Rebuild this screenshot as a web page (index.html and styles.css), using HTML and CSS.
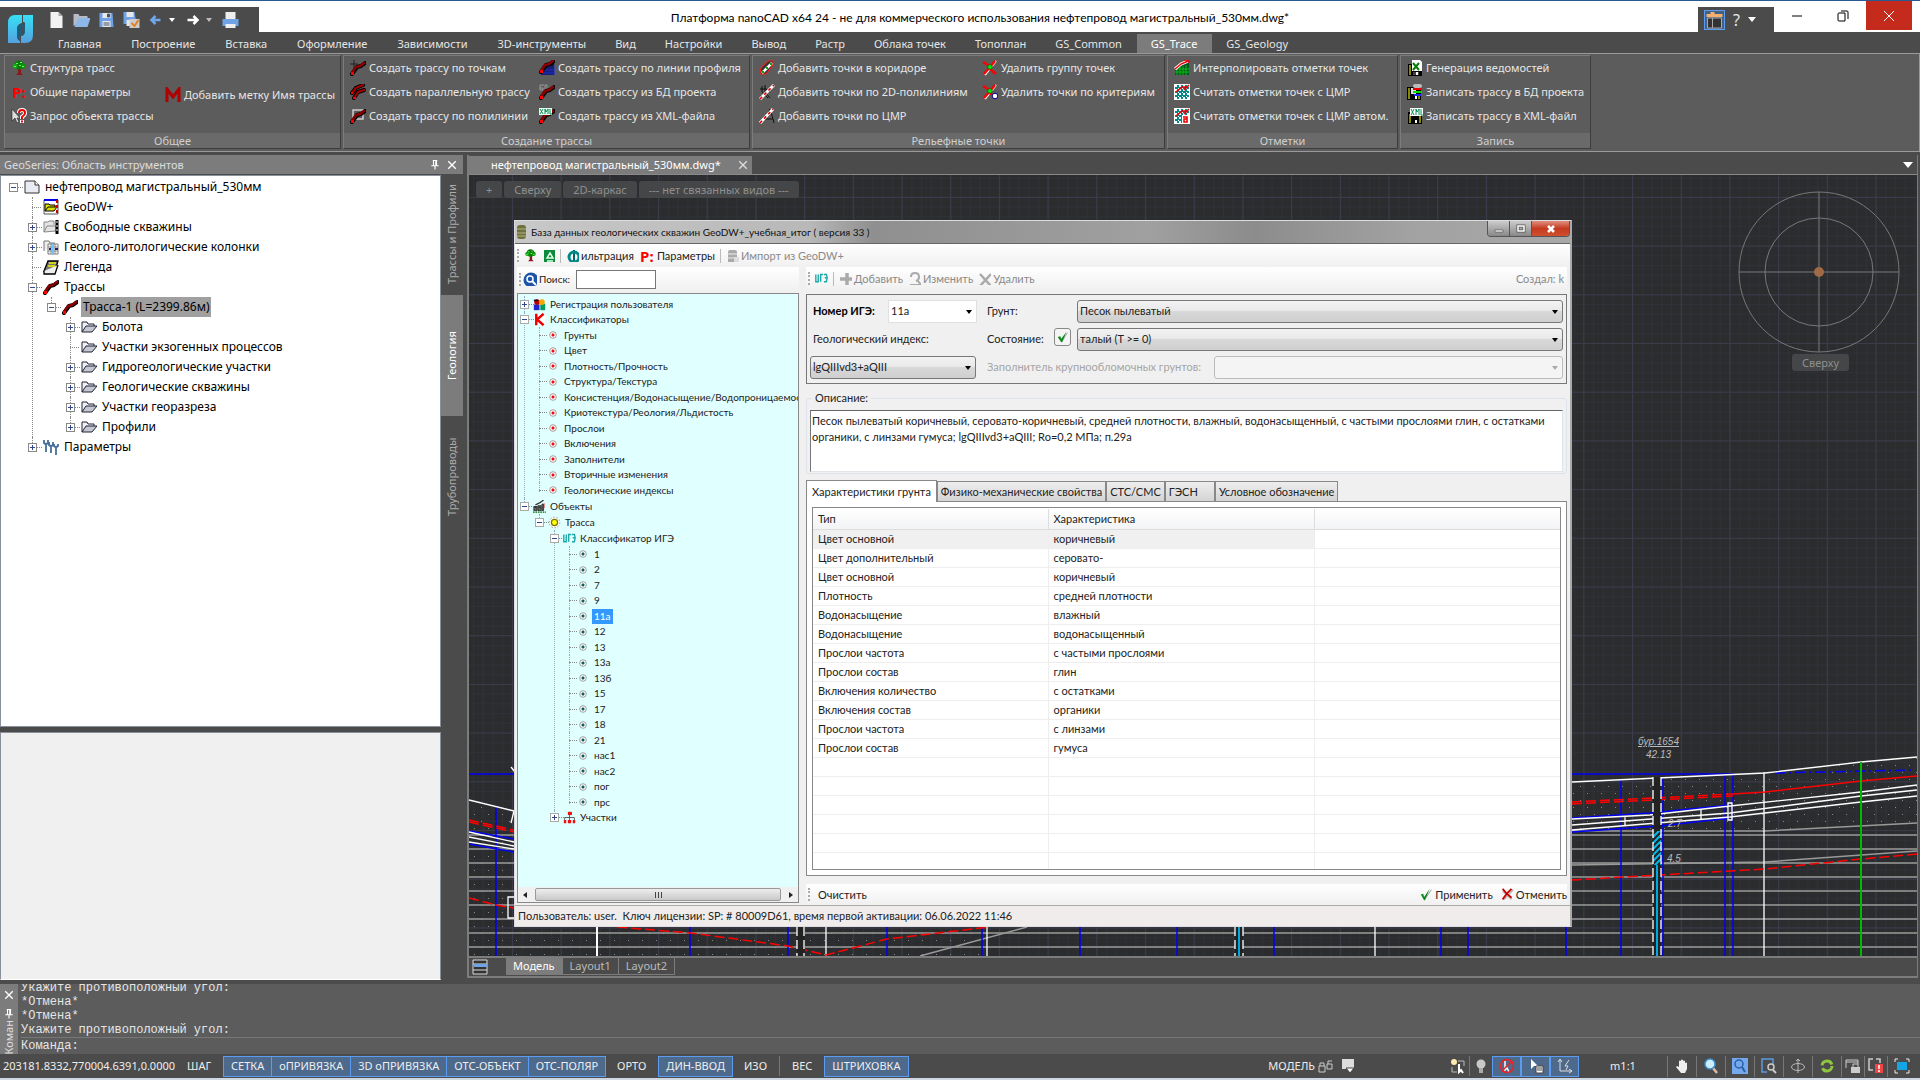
FILE: index.html
```html
<!DOCTYPE html>
<html lang="ru">
<head>
<meta charset="utf-8">
<title>Платформа nanoCAD x64 24</title>
<link rel="stylesheet" href="styles.css">
</head>
<body>
<svg class="sprite" aria-hidden="true">
  <symbol id="route" viewBox="0 0 16 16"><path d="M2 14l5-7 4-1 4-3" fill="none" stroke="#000" stroke-width="4" stroke-linecap="round" stroke-linejoin="round"/><path d="M2 13l4-6 4-1 4-3" fill="none" stroke="#8b0000" stroke-width="2.600" stroke-linecap="round" stroke-linejoin="round"/><path d="M1 12h3v3H1z" fill="#f00"/></symbol>
  <symbol id="tree" viewBox="0 0 16 16"><path d="M7 8h3v5l2 2H5l2-2z" fill="#8b1a1a"/><circle cx="8" cy="5" r="4.600" fill="#0b7a0b"/><circle cx="4" cy="6" r="2.500" fill="#19a519"/><circle cx="12" cy="6" r="2.500" fill="#0f930f"/><path d="M5 3h2v1H5zM9 2h2v1H9zM8 5h2v1H8zM3 6h2v1H3zM11 6h2v1h-2z" fill="#5f5"/></symbol>
  <symbol id="query" viewBox="0 0 16 16"><path d="M1 1v12l3-3 2 5 2-1-2-4h3z" fill="#ddd" stroke="#222" stroke-width=".6"/><path d="M8 5q0-3 3-3t3 3q0 2-3 4v2m0 1v3" fill="none" stroke="#fff" stroke-width="4"/><path d="M8 5q0-3 3-3t3 3q0 2-3 4v2m0 1.500v2" fill="none" stroke="#e00" stroke-width="2"/></symbol>
  <symbol id="route-pts" viewBox="0 0 16 16"><path d="M4 0v8M0 4h8" stroke="#222"/><use href="#route"/></symbol>
  <symbol id="route-par" viewBox="0 0 16 16"><path d="M2 9l4-5 7-3M4 14l4-6 6-2" fill="none" stroke="#000" stroke-width="4" stroke-linecap="round"/><path d="M2 9l4-5 7-3M4 14l4-6 6-2" fill="none" stroke="#a00000" stroke-width="2.200" stroke-linecap="round"/><path d="M3 13h3v2H3zM1 8h2v2H1z" fill="#f00"/></symbol>
  <symbol id="route-poly" viewBox="0 0 16 16"><path d="M3 2h10v9H3z" fill="none" stroke="#ccc" stroke-width="1.500"/><use href="#route"/></symbol>
  <symbol id="route-prof" viewBox="0 0 16 16"><path d="M2 15V9l5-4 8-2v12z" fill="#113"/><path d="M3 15v-3m2 3V9m2 6V8m2 7V7m2 8V6m2 9V6m2 9V5M2 13h14M5 10h11" stroke="#2233dd" stroke-width=".8"/><use href="#route" y="-2"/></symbol>
  <symbol id="route-db" viewBox="0 0 16 16"><path d="M1 1h4M1 1v5h3V4H1M6 6V1h2v5M5 6h4" stroke="#999" fill="none"/><use href="#route"/></symbol>
  <symbol id="route-xml" viewBox="0 0 16 16"><use href="#route"/><path d="M0 0h13v7H0z" fill="#e8fff4"/><path d="M1 1l3 5M4 1L1 6M6 6V1l1 3 2-3v5M11 1v5h2" fill="none" stroke="#0a8a50"/></symbol>
  <symbol id="corridor" viewBox="0 0 16 16"><path d="M1 13l1-5 7-7h5v4l-7 9H2z" fill="#333" stroke="#f02020" stroke-width="1.200"/><path d="M3 13L13 3" stroke="#fff" stroke-width="2.500"/><path d="M3 11h2v2H3zM7 7h2v2H7zM11 3h2v2h-2z" fill="#0a0"/></symbol>
  <symbol id="relief" viewBox="0 0 16 16"><path d="M3 2v6l6 6M6 1v7l5 6M1 5h6l4 3" fill="none" stroke="#111"/><path d="M1 15L15 1" stroke="#fff" stroke-width="3"/><path d="M1 15L15 1" stroke="#d00" stroke-width="1.600" stroke-dasharray="3 3"/></symbol>
  <symbol id="relief2" viewBox="0 0 16 16"><path d="M11 1L6 11h8zM14 11l1 4M6 11l-5 4" fill="none" stroke="#111"/><path d="M1 15L14 1" stroke="#fff" stroke-width="3"/><path d="M1 15L14 1" stroke="#d00" stroke-width="1.600" stroke-dasharray="3 3"/></symbol>
  <symbol id="del" viewBox="0 0 16 16"><path d="M3 15L14 1" stroke="#fff" stroke-width="2"/><path d="M1 2l5 3 3 5 5 4M13 1L8 7l-6 7" fill="none" stroke="#f00" stroke-width="2.500"/><circle cx="8" cy="7" r="2.300" fill="#0e0" stroke="#050" stroke-width=".6"/></symbol>
  <symbol id="del2" viewBox="0 0 16 16"><use href="#del"/><circle cx="13" cy="12" r="2.800" fill="#fff" stroke="#009"/></symbol>
  <symbol id="interp" viewBox="0 0 16 16"><path d="M1 15V9l7-4 7-2v12z" fill="#052"/><path d="M3 15V9m3 6V7m3 8V6m3 9V5M1 12h14M2 9h13" stroke="#1b1" /><path d="M1 9l6-5 7-3" stroke="#fff" stroke-width="3" fill="none"/><path d="M1 9l6-5 7-3m-4-1h5v3" stroke="#e00" stroke-width="1.400" fill="none"/></symbol>
  <symbol id="grid" viewBox="0 0 16 16"><path d="M0 0h16v16H0z" fill="#fff"/><path d="M1 4h14M1 8h14M1 12h14M4 1v14M8 1v14M12 1v14" stroke="#088" stroke-width="2" stroke-dasharray="3 1"/><path d="M2 8l6-5h6m-4 3l5-5" stroke="#e00" stroke-width="1.600" fill="none"/></symbol>
  <symbol id="grida" viewBox="0 0 16 16"><use href="#grid"/><path d="M8 7h7v8H8z" fill="#fff"/><path d="M9 9h4v5h-3v-3h3" stroke="#e00" stroke-width="1.600" fill="none"/></symbol>
  <symbol id="flop-x" viewBox="0 0 16 16"><path d="M1 4h14v12H1z" fill="#000"/><path d="M2 5h2v10H2z" fill="#880"/><path d="M5 0h8l2 2v9H5z" fill="#fff"/><path d="M6 3l6 7M12 3L6 10" stroke="#0a7a0a" stroke-width="2"/><path d="M6 12h6v3H6z" fill="#444"/><path d="M9 12h2v3H9z" fill="#fff"/></symbol>
  <symbol id="flop-db" viewBox="0 0 16 16"><path d="M0 3h14v13H0z" fill="#000"/><path d="M1 4h2v11H1zM11 12h2v3h-2z" fill="#880"/><path d="M4 4h5v6H4z" fill="#ddd"/><rect x="6" y="0" width="9" height="4" rx="2" fill="#bbb"/><path d="M6 5h9" stroke="#e00" stroke-width="2"/><path d="M6 8h9" stroke="#0d0" stroke-width="2"/><path d="M7 11h7" stroke="#22e" stroke-width="2"/><path d="M8 12h2v3H8z" fill="#fff"/></symbol>
  <symbol id="flop-xml" viewBox="0 0 16 16"><path d="M1 4h14v12H1z" fill="#000"/><path d="M2 6h2v9H2zM12 8h2v7h-2z" fill="#880"/><path d="M3 0h13v8H3z" fill="#fff"/><path d="M4 1l3 6M7 1L4 7M9 7V1l1 3 2-3v6M14 1v6h2" fill="none" stroke="#0a8a50"/><path d="M8 12h2v3H8z" fill="#fff"/></symbol>
  <symbol id="folder" viewBox="0 0 16 16"><path d="M1 13V3h5l1 2h6v3" fill="#eef0f5" stroke="#223"/><path d="M1 13l4-6h11l-5 6z" fill="#c4c8d2" stroke="#223"/></symbol>
  <symbol id="page" viewBox="0 0 16 16"><path d="M1 2h10l4 4v8H1z" fill="#e8ebf2" stroke="#333"/><path d="M11 2v4h4" fill="#fff" stroke="#333"/></symbol>
  <symbol id="geodw" viewBox="0 0 16 16"><path d="M1 1h14v14H1z" fill="#fff" stroke="#555"/><path d="M1 0h14v2H1z" fill="#00e"/><path d="M2 12V5h4l1 1h5v2M2 12l3-4h9l-3 4z" fill="#dd0" stroke="#000"/><path d="M14 1v13" stroke="#c00" stroke-width="2" stroke-dasharray="3 2"/></symbol>
  <symbol id="wells" viewBox="0 0 16 16"><path d="M1 13V3h4l1-1h5v4M1 13l3-6h9v5z" fill="#e4e4e4" stroke="#888"/><path d="M14 1v14" stroke="#000" stroke-width="3"/><path d="M14 2v12" stroke="#fff" stroke-dasharray="2 2"/></symbol>
  <symbol id="cols" viewBox="0 0 16 16"><path d="M1 12V2h5l1 2h5" fill="#eee" stroke="#777"/><path d="M5 5h10v10H5z" fill="#fff" stroke="#777"/><path d="M8 5v10M12 5v10M5 8h10M5 12h10" stroke="#888"/><path d="M9 5h2v10H9z" fill="#6ac5ff"/><path d="M6 9h2v2H6zM12 9h3v2h-3z" fill="#226"/></symbol>
  <symbol id="book" viewBox="0 0 16 16"><path d="M1 12L5 2h10l-3 10z" fill="#777" stroke="#000" stroke-width="1.300"/><path d="M1 12v3h11l3-9" fill="#eee" stroke="#000" stroke-width="1.300"/><path d="M6 4h7M5 7h7" stroke="#ee0" stroke-width="1.500"/></symbol>
  <symbol id="tools" viewBox="0 0 16 16"><path d="M1 1v3q2 2 4 0V1M3 5v8M6 3v3q2 2 4 0V3M8 7v7M11 5v2q2 2 4 0V5M13 8v8" fill="none" stroke="#456f9a" stroke-width="1.800"/></symbol>
  <symbol id="users" viewBox="0 0 16 16"><path d="M1 8h7v7H1z" fill="#22c"/><path d="M9 7h6v8H9z" fill="#0a9a60"/><circle cx="5" cy="5" r="3.500" fill="#b00"/><circle cx="11" cy="5" r="3.500" fill="#f5a800"/><path d="M1 2h5v2H1z" fill="#111"/></symbol>
  <symbol id="objs" viewBox="0 0 16 16"><path d="M1 8h4v5H1zM6 7h4v6H6zM11 5h2v8h-2z" fill="#666" stroke="#222"/><path d="M3 6l6-3 4-3M2 9h2M7 9h2" stroke="#333" stroke-width="1.500"/><path d="M0 15h16" stroke="#060" stroke-dasharray="2 1" stroke-width="1.500"/><path d="M14 4v6" stroke="#e66"/></symbol>
  <symbol id="sun" viewBox="0 0 16 16"><circle cx="8" cy="8" r="6.500" fill="#fff" stroke="#888" stroke-dasharray="2 2"/><circle cx="8" cy="8" r="3.800" fill="#ff0" stroke="#770" stroke-width="1.500"/></symbol>
  <symbol id="ige" viewBox="0 0 16 16"><path d="M1 3v9h3V3v9M7 12V3h3M11 3h3l1 4-1 5h-3M12 7h3" fill="none" stroke="#19a9a9" stroke-width="1.700"/></symbol>
  <symbol id="org" viewBox="0 0 16 16"><path d="M6 1h5v4H6z" fill="#e11"/><path d="M8 5v3M2 11V8h12v3M8 8v3" stroke="#444" fill="none"/><path d="M1 11h3v4H1zM6 11h4v4H6zM12 11h3v4h-3z" fill="#e11"/></symbol>
  <symbol id="bullet-r" viewBox="0 0 8 8"><circle cx="4" cy="4" r="3.300" fill="#fff" stroke="#a08080" stroke-width=".8"/><path d="M4 2.500v3M2.500 4h3" stroke="#e00" stroke-width="1.600"/></symbol>
  <symbol id="bullet-g" viewBox="0 0 8 8"><circle cx="4" cy="4" r="3.300" fill="#fff" stroke="#888" stroke-width=".8"/><path d="M4 2.500v3M2.500 4h3" stroke="#055" stroke-width="1.600"/></symbol>
  <symbol id="check" viewBox="0 0 16 16"><path d="M6 14l8-12" stroke="#999" stroke-width="1.200"/><path d="M1 8l3-1 1 4 7-10-6 14H5z" fill="#0a8a1a"/></symbol>
  <symbol id="cross" viewBox="0 0 16 16"><path d="M4 14L15 2M2 4l11 10" stroke="#bbb" stroke-width="2"/><path d="M2 1l5 6 6-6M7 7l-5 7M7 7l6 5" stroke="#c00" stroke-width="2.200" fill="none"/></symbol>
  <symbol id="lens" viewBox="0 0 16 16"><path d="M10 10l4 5" stroke="#dba" stroke-width="2.500"/><circle cx="7" cy="6" r="5" fill="#cdeeff" stroke="#3d8fd0" stroke-width="1.500"/></symbol>
  <symbol id="bulb" viewBox="0 0 16 16"><circle cx="8" cy="6" r="4.500" fill="currentColor"/><path d="M6 10h4v5H6z" fill="#aaa"/></symbol>
  <symbol id="pin" viewBox="0 0 16 16"><path d="M5 2h6M6 2v7M10 2v7M9 2v7M3 9h10M8 9v5" stroke="#fff" stroke-width="1.500"/></symbol>
  <symbol id="x" viewBox="0 0 16 16"><path d="M3 3l10 10M13 3L3 13" stroke="currentColor" stroke-width="1.800"/></symbol>
</svg>

<header class="titlebar">
  <div class="quick">
    <svg class="logo" viewBox="0 0 26 30"><defs><linearGradient id="lg" x2="0" y2="1"><stop stop-color="#35e1f5"/><stop offset="1" stop-color="#55a0e0"/></linearGradient></defs><path d="M7 0h7v8q-5 1-5 6v7q0 4 3 5v2H0V8q0-8 7-8zM15 0h10v20q0 8-8 8h-4v-7q4 0 4-5V8q0-1-2-1z" fill="url(#lg)"/><path d="M14 9q-5 1-5 5v7q0 3 3 4v-5h2q3-1 3-5v-3q0-3-3-3z" fill="#1d5e7c"/><path d="M13 12h3v6h-3z" fill="#4b4b4b"/></svg>
    <button aria-label="Создать"><svg viewBox="0 0 16 18"><path d="M2 1h8l4 4v12H2z" fill="#f2f2f2"/><path d="M10 1v4h4z" fill="#aaa"/></svg></button>
    <button aria-label="Открыть"><svg viewBox="0 0 16 18"><path d="M0 15V3h5l1 2h8v3" fill="#b7bcc4"/><path d="M1 16l4-9h12l-3 9z" fill="#8fb8ea"/></svg></button>
    <button aria-label="Сохранить"><svg viewBox="0 0 16 18"><path d="M1 2h13l1 14H1z" fill="#6fa3e6"/><path d="M4 2h8v5H4zM4 10h8v6H4z" fill="#e8e8e8"/><path d="M9 3h2v3H9zM5 12h6M5 14h6" fill="#456" stroke="#456"/></svg></button>
    <button aria-label="Сохранить как"><svg viewBox="0 0 16 18"><path d="M0 1h11l2 12H0z" fill="#6fa3e6"/><path d="M3 1h7v5H3zM3 9h7v6H3z" fill="#e8e8e8"/><path d="M6 8h10v9H6z" fill="#ccc"/><path d="M8 12l3 3 4-6" stroke="#e08020" stroke-width="2" fill="none"/></svg></button>
    <button aria-label="Отменить"><svg viewBox="0 0 16 18"><path d="M12 9H3m4-4L3 9l4 4" stroke="#6fa8ea" stroke-width="2.500" fill="none"/></svg></button>
    <i class="down"></i>
    <button aria-label="Повторить"><svg viewBox="0 0 16 18"><path d="M2 9h10M8 5l4 4-4 4" stroke="#fff" stroke-width="2.500" fill="none"/></svg></button>
    <i class="down dim"></i>
    <button aria-label="Печать"><svg viewBox="0 0 16 18"><path d="M3 1h10v8H3z" fill="#eee"/><path d="M0 8h16v7H0z" fill="#6fa3e6"/><path d="M3 13h10v4H3z" fill="#eee"/></svg></button>
    <i class="down more"></i>
  </div>
  <h1>Платформа nanoCAD x64 24 - не для коммерческого использования нефтепровод магистральный_530мм.dwg*</h1>
  <div class="helpbox">
    <button class="face" aria-label="Интерфейс"><svg viewBox="0 0 18 18"><path d="M1 3h4V1h4v2h8v3H1z" fill="#f5b070"/><path d="M2 7h14v10H2zM7 7v10" fill="#333" stroke="#aaa"/></svg></button>
    <button class="q">?</button><i class="down"></i>
  </div>
  <div class="winbtns">
    <button aria-label="Свернуть"><svg viewBox="0 0 12 12"><path d="M1 6h10" stroke="#000"/></svg></button>
    <button aria-label="Развернуть"><svg viewBox="0 0 12 12"><path d="M1 4q0-1 1-1h6v8H2q-1 0-1-1zM4 1h6q1 0 1 1v7" fill="none" stroke="#000"/></svg></button>
    <button class="close" aria-label="Закрыть"><svg viewBox="0 0 12 12"><path d="M1 1l10 10M11 1L1 11" stroke="#fff"/></svg></button>
  </div>
</header>

<nav class="menu">
  <a href="#">Главная</a><a href="#">Построение</a><a href="#">Вставка</a><a href="#">Оформление</a><a href="#">Зависимости</a><a href="#">3D-инструменты</a><a href="#">Вид</a><a href="#">Настройки</a><a href="#">Вывод</a><a href="#">Растр</a><a href="#">Облака точек</a><a href="#">Топоплан</a><a href="#">GS_Common</a><a href="#" class="on">GS_Trace</a><a href="#">GS_Geology</a>
</nav>

<section class="ribbon">
  <div class="group g1">
    <div class="cols">
      <div class="col"><button><svg><use href="#tree"/></svg>Структура трасс</button><button><b class="pp">P:</b>Общие параметры</button><button><svg><use href="#query"/></svg>Запрос объекта трассы</button></div>
      <div class="col mid"><button><svg viewBox="0 0 16 16"><path d="M2 15V2l6 8 6-8v13" fill="none" stroke="#b00000" stroke-width="3"/></svg>Добавить метку Имя трассы</button></div>
    </div>
    <h2>Общее</h2>
  </div>
  <div class="group g2">
    <div class="cols">
      <div class="col"><button><svg><use href="#route-pts"/></svg>Создать трассу по точкам</button><button><svg><use href="#route-par"/></svg>Создать параллельную трассу</button><button><svg><use href="#route-poly"/></svg>Создать трассу по полилинии</button></div>
      <div class="col"><button><svg><use href="#route-prof"/></svg>Создать трассу по линии профиля</button><button><svg><use href="#route-db"/></svg>Создать трассу из БД проекта</button><button><svg><use href="#route-xml"/></svg>Создать трассу из XML-файла</button></div>
    </div>
    <h2>Создание трассы</h2>
  </div>
  <div class="group g3">
    <div class="cols">
      <div class="col"><button><svg><use href="#corridor"/></svg>Добавить точки в коридоре</button><button><svg><use href="#relief"/></svg>Добавить точки по 2D-полилиниям</button><button><svg><use href="#relief2"/></svg>Добавить точки по ЦМР</button></div>
      <div class="col"><button><svg><use href="#del"/></svg>Удалить группу точек</button><button><svg><use href="#del2"/></svg>Удалить точки по критериям</button></div>
    </div>
    <h2>Рельефные точки</h2>
  </div>
  <div class="group g4">
    <div class="cols">
      <div class="col"><button><svg><use href="#interp"/></svg>Интерполировать отметки точек</button><button><svg><use href="#grid"/></svg>Считать отметки точек с ЦМР</button><button><svg><use href="#grida"/></svg>Считать отметки точек с ЦМР автом.</button></div>
    </div>
    <h2>Отметки</h2>
  </div>
  <div class="group g5">
    <div class="cols">
      <div class="col"><button><svg><use href="#flop-x"/></svg>Генерация ведомостей</button><button><svg><use href="#flop-db"/></svg>Записать трассу в БД проекта</button><button><svg><use href="#flop-xml"/></svg>Записать трассу в XML-файл</button></div>
    </div>
    <h2>Запись</h2>
  </div>
</section>

<main class="work">
  <aside class="dock">
    <div class="dockhead"><span>GeoSeries: Область инструментов</span><svg><use href="#pin"/></svg><svg><use href="#x"/></svg></div>
    <div class="dockbody">
      <div class="panes">
        <div class="pane treepane">
          <ul class="tree big root">
            <li><div class="row"><i class="box minus"></i><svg><use href="#page"/></svg><span>нефтепровод магистральный_530мм</span></div>
              <ul>
                <li><div class="row"><i class="stub"></i><svg><use href="#geodw"/></svg><span>GeoDW+</span></div></li>
                <li><div class="row"><i class="box plus"></i><svg><use href="#wells"/></svg><span>Свободные скважины</span></div></li>
                <li><div class="row"><i class="box plus"></i><svg><use href="#cols"/></svg><span>Геолого-литологические колонки</span></div></li>
                <li><div class="row"><i class="stub"></i><svg><use href="#book"/></svg><span>Легенда</span></div></li>
                <li><div class="row"><i class="box minus"></i><svg><use href="#route"/></svg><span>Трассы</span></div>
                  <ul>
                    <li><div class="row"><i class="box minus"></i><svg><use href="#route"/></svg><span class="sel">Трасса-1 (L=2399.86м)</span></div>
                      <ul>
                        <li><div class="row"><i class="box plus"></i><svg><use href="#folder"/></svg><span>Болота</span></div></li>
                        <li><div class="row"><i class="stub"></i><svg><use href="#folder"/></svg><span>Участки экзогенных процессов</span></div></li>
                        <li><div class="row"><i class="box plus"></i><svg><use href="#folder"/></svg><span>Гидрогеологические участки</span></div></li>
                        <li><div class="row"><i class="box plus"></i><svg><use href="#folder"/></svg><span>Геологические скважины</span></div></li>
                        <li><div class="row"><i class="box plus"></i><svg><use href="#folder"/></svg><span>Участки георазреза</span></div></li>
                        <li><div class="row"><i class="box plus"></i><svg><use href="#folder"/></svg><span>Профили</span></div></li>
                      </ul>
                    </li>
                  </ul>
                </li>
                <li><div class="row"><i class="box plus"></i><svg><use href="#tools"/></svg><span>Параметры</span></div></li>
              </ul>
            </li>
          </ul>
        </div>
        <div class="pane props"></div>
      </div>
      <div class="vtabs"><button>Трассы и Профили</button><button class="on">Геология</button><button>Трубопроводы</button></div>
    </div>
  </aside>

  <section class="docs">
    <div class="doctabs"><button class="doctab">нефтепровод магистральный_530мм.dwg*<svg><use href="#x"/></svg></button><i class="down"></i></div>
    <div class="canvas">
      <svg class="drawing" viewBox="469 175 1448 781" preserveAspectRatio="xMaxYMax slice">
        <defs>
          <pattern id="minor" x="1583.300" y="294.300" width="9.740" height="9.740" patternUnits="userSpaceOnUse"><path d="M0 .5h9.740M.5 0v9.740" stroke="#303138"/></pattern>
          <pattern id="major" x="1583.300" y="294.300" width="48.700" height="48.700" patternUnits="userSpaceOnUse"><path d="M0 .5h48.700M.5 0v48.700" stroke="#3b3b4c"/></pattern>
          <pattern id="dots" x="473" y="940" width="14" height="14" patternUnits="userSpaceOnUse"><path d="M1 0h1v1H1zM8 7h1v1H8z" fill="#888"/></pattern>
          <pattern id="hatch" width="6" height="6" patternUnits="userSpaceOnUse"><path d="M-1 7L7-1M-1 1l2-2M5 7l2-2" stroke="#00b8f0" stroke-width="2"/></pattern>
        </defs>
        <rect x="469" y="175" width="1448" height="781" fill="#2b2c2e"/>
        <rect x="469" y="175" width="1448" height="781" fill="url(#minor)"/>
        <rect x="469" y="175" width="1448" height="781" fill="url(#major)"/>
        <g fill="none" stroke="#77787a"><circle cx="1819" cy="272" r="80"/><circle cx="1819" cy="272" r="54"/><path d="M1739 272h160M1819 192v160"/></g>
        <circle cx="1819" cy="272" r="5" fill="#a06a45"/>
        <path d="M469 800l45 11v35l-45-12zM1572 783l193-10 152-16v66l-152 7h-193zM469 850h45v106h-45zM514 927h475v29H514z" fill="url(#dots)"/>
        <g stroke="#9a9a9a" stroke-width="1.500" fill="none">
          <path d="M469 835h45M469 849h45M469 863h45M469 877h45M469 891h45M469 905h45M469 919h45M1572 835h345M1572 849h345M1572 863h345M1572 877h345M1572 891h345M1572 905h345M1572 919h345M469 933h1448M469 947h1448"/>
          <path d="M1572 831h193l152-8M1572 865l193-3 152-11M920 956l107-29"/>
        </g>
        <path d="M496 807v149M690 927v29M788 927v29M887 927v29M982 927v29M1080 927v29M1177 927v29M1274 927v29M1441 927v29M1468 927v29M1566 927v29M1621 779v177M1663 778v178M1725 775v181M1733 775v181M469 774h45M1572 774h161M469 831l45 8M469 844l45 8M1572 818l78-5 80-8M1572 832l88-6 70-8" stroke="#0000f5" stroke-width="1.500" fill="none"/>
        <path d="M1775 773l138-3" stroke="#00f" stroke-width="1.500" stroke-dasharray="10 4 2 4"/>
        <path d="M597 927v29" stroke="#fff" stroke-width="2"/>
        <g stroke="#fff" stroke-width="1.300" fill="none">
          <path d="M826 927v29M987 927v29M1375 927v29M1764 772v184M514 897h-6v21h6M469 800l45 11M469 832l45 10M469 837l45 9M469 842l45 7M511 823l3-12M511 767l4 5"/>
          <path d="M1572 782l193-9 96-11 56-5M1572 819l78-4 80-9 131-14 56-7M1572 825l158-12 131-17 56-6M1572 830l158-13 131-15 56-6M1625 816v10M1701 809v10M1728 803h4v17h-4z"/>
        </g>
        <g stroke="#f00" stroke-width="1.500" fill="none">
          <path d="M1733 794l32-2 96-11 56-5"/>
          <path d="M1572 802l161-8M1572 804l161-8M469 820l45 10M469 822l45 10M469 898l27 7 18 3M617 927l74 6 97 13 38 9 61-16 103-12M1572 880l88-5 105-6 96-10 56-5" stroke-dasharray="10 4"/>
        </g>
        <path d="M1861 762v194" stroke="#0b0" stroke-width="2"/>
        <path d="M1653 777h8v179h-8zM797 927h8v29h-8zM1235 927h8v29h-8z" fill="#222"/>
        <path d="M1653 831h8v34h-8z" fill="url(#hatch)"/>
        <path d="M1657 865v91M1239 927v29" stroke="#00a8e0" stroke-width="2"/>
        <path d="M1653 777v179M1661 777v179M797 927v29M804 927v29M1235 927v29M1243 927v29" stroke="#fff" stroke-width="1.300" stroke-dasharray="9 4"/>
        <g class="cadtext"><text x="1638" y="745" text-decoration="underline">бур.1654</text><text x="1646" y="758">42.13</text><text x="1668" y="827">2.7</text><text x="1667" y="862">4.5</text></g>
      </svg>
      <div class="viewbtns"><button>+</button><button>Сверху</button><button>2D-каркас</button><button>--- нет связанных видов ---</button></div>
      <button class="cube">Сверху</button>
    </div>
    <div class="layouts"><svg class="sheet" viewBox="0 0 16 16"><path d="M1 1h14v14H1zM1 5h14M1 11h14" fill="#333" stroke="#ddd"/><path d="M2 5h13v3H2z" fill="#6fa3e6"/></svg><button class="on">Модель</button><button>Layout1</button><button>Layout2</button></div>
  </section>
</main>

<section class="console">
  <div class="conside"><svg><use href="#x"/></svg><svg><use href="#pin"/></svg><span>Коман</span></div>
  <div class="conmain">
    <div class="log"><p>Укажите противоположный угол:</p><p>*Отмена*</p><p>*Отмена*</p><p>Укажите противоположный угол:</p></div>
    <label class="cmd">Команда:<input type="text" aria-label="Команда"></label>
  </div>
</section>

<footer class="status">
  <span class="coords">203181.8332,770004.6391,0.0000</span>
  <button>ШАГ</button><button class="on">СЕТКА</button><button class="on">оПРИВЯЗКА</button><button class="on">3D оПРИВЯЗКА</button><button class="on">ОТС-ОБЪЕКТ</button><button class="on">ОТС-ПОЛЯР</button><button>ОРТО</button><button class="on">ДИН-ВВОД</button><button>ИЗО</button><i class="sep"></i><button>ВЕС</button><button class="on">ШТРИХОВКА</button>
  <div class="right">
    <span class="model">МОДЕЛЬ</span>
    <svg class="ic"><g fill="none" stroke="#ccc"><path d="M1 8h6v6H1zM2 8V5h4v3M9 6h5v5H9zM10 6V3h4"/></g></svg>
    <svg class="ic"><path d="M2 1h12v10H2z" fill="#ddd"/><path d="M6 10h8l-4 5z" fill="#fff" stroke="#444"/></svg>
    <span class="gap"></span>
    <svg class="ic"><path d="M8 3h6v5M2 9v5h5" stroke="#bbb" fill="none"/><circle cx="4" cy="4" r="3" fill="#ffe9b0"/><path d="M9 6v8l2-2 2 3" stroke="#fff" fill="none" stroke-width="2"/></svg><i class="sep"></i>
    <svg class="ic bulb"><use href="#bulb"/></svg>
    <div class="trio">
      <button aria-label="Выбор"><svg><path d="M6 3v9l2-2 2 4" stroke="#fff" fill="none" stroke-width="1.500"/><circle cx="8" cy="8" r="6.500" fill="none" stroke="#e22" stroke-width="1.500"/><path d="M3 13L13 3" stroke="#e22" stroke-width="1.500"/></svg></button>
      <button aria-label="Меню"><svg><path d="M3 1v10l3-3h4z" fill="#fff"/><path d="M8 8h7v7H8zM9 10h5M9 12h5" fill="#fff" stroke="#444"/></svg></button>
      <button aria-label="ПСК"><svg><path d="M3 2v11h12M1 4l2-3 2 3M12 11l3 2-3 2M12 2L8 8h3l-2 4" stroke="#ddd" fill="none"/></svg></button>
    </div>
    <span class="scale">m1:1</span>
    <div class="tools">
      <button aria-label="Панорама"><svg><path d="M3 8l2 1V3q1-1 2 0v-1q1-1 2 0v1q1-1 2 0v2q1-1 2 0v6l-2 4H7L2 9z" fill="#eee"/></svg></button>
      <button aria-label="Зум"><svg><use href="#lens"/></svg></button>
      <button class="fill" aria-label="Зум рамкой"><svg><circle cx="7" cy="6" r="4" fill="none" stroke="#2b5fa8" stroke-width="1.500"/><path d="M10 9l3 5" stroke="#2b5fa8" stroke-width="2"/></svg></button>
      <button aria-label="Зум объекта"><svg><path d="M12 6V1H1v13h5" stroke="#5b9be0" fill="none" stroke-width="1.500"/><circle cx="10" cy="9" r="3" fill="none" stroke="#ccc" stroke-width="1.500"/><path d="M12 12l3 3" stroke="#ccc" stroke-width="2"/></svg></button>
      <button aria-label="Орбита"><svg><ellipse cx="8" cy="9" rx="6.500" ry="3.500" fill="none" stroke="#bbb"/><path d="M8 1v14M6 3l2-2 2 2" stroke="#bbb" fill="none"/></svg></button>
      <button aria-label="Обновить"><svg><circle cx="8" cy="8" r="5" fill="none" stroke="#8ec63f" stroke-width="3" stroke-dasharray="13 3"/></svg></button>
      <button class="narrow" aria-label="Блокировка"><svg><path d="M1 10V2h12v4M1 4h12" stroke="#ccc" fill="none"/><path d="M6 9h9v6H6z" fill="#ccc"/><path d="M8 9V6h5v3" fill="none" stroke="#ccc"/></svg></button>
      <button class="narrow" aria-label="Ошибки"><svg><path d="M5 1H1v11h4M8 1h4v4" stroke="#ccc" fill="none" stroke-width="1.500"/><path d="M7 6h8v9H7z" fill="#e44"/><path d="M11 7v4M11 12v2" stroke="#fff" stroke-width="1.500"/></svg></button>
      <button aria-label="Экран"><svg><path d="M1 4V1h3M12 1h3v3M15 12v3h-3M4 15H1v-3" stroke="#eee" fill="none"/><path d="M3 4h10v8H3z" fill="#13a5e6"/></svg></button>
    </div>
  </div>
</footer>

<section class="dialog" role="dialog" aria-label="База данных">
  <div class="dlgtitle"><svg viewBox="0 0 12 16"><rect x="1" y="1" width="9" height="14" rx="3" fill="#6f7040"/><path d="M1 5h9M1 9h9M1 12h9" stroke="#b5b47a"/></svg><span>База данных геологических скважин GeoDW+_учебная_итог ( версия 33 )</span>
    <div class="dlgbtns"><button aria-label="Свернуть"><svg viewBox="0 0 16 12"><path d="M4 7h8v2H4z" fill="#fff" stroke="#555" stroke-width=".7"/></svg></button><button aria-label="Развернуть"><svg viewBox="0 0 16 12"><path d="M5 3h6v5H5z" fill="none" stroke="#555" stroke-width="3"/><path d="M5 3h6v5H5z" fill="none" stroke="#fff" stroke-width="1.500"/></svg></button><button class="close" aria-label="Закрыть"><svg viewBox="0 0 16 12"><path d="M5 3l6 6M11 3L5 9" stroke="#fff" stroke-width="2.500"/></svg></button></div>
  </div>
  <div class="bar bar1"><i class="grip"></i><svg><use href="#tree"/></svg><svg class="ml"><path d="M2 1h11v14H2z" fill="#0a8a3a"/><path d="M8 4l3 5H5zM5 12h6" fill="none" stroke="#dfffe8" stroke-width="1.500"/></svg><i class="vsep"></i><button><svg><path d="M8 1v14" stroke="#066" stroke-width="2"/><circle cx="8" cy="8" r="5" fill="none" stroke="#088" stroke-width="3"/></svg>ильтрация</button><button><b class="pp">P:</b>Параметры</button><i class="vsep"></i><button disabled><svg><rect x="2" y="1" width="9" height="14" rx="2" fill="#aaa"/><path d="M2 5h9M2 9h9" stroke="#eee"/><path d="M8 8h5v5H8z" fill="#ddd"/></svg>Импорт из GeoDW+</button></div>
  <div class="split">
    <div class="side">
      <div class="bar find"><i class="grip"></i><svg><circle cx="8" cy="8" r="7.500" fill="#1c55a8"/><circle cx="7" cy="7" r="3" fill="none" stroke="#fff" stroke-width="1.500"/><path d="M9 9l4 4" stroke="#fff" stroke-width="2"/></svg><label for="find">Поиск:</label><input id="find" type="text"></div>
      <div class="treebox">
        <ul class="tree small root">
          <li><div class="row"><i class="box plus"></i><svg><use href="#users"/></svg><span>Регистрация пользователя</span></div></li>
          <li><div class="row"><i class="box minus"></i><svg viewBox="0 0 16 16"><path d="M1 1h14v14H1z" fill="#fff"/><path d="M4 1v14M13 1L5 8l8 7" fill="none" stroke="#e00" stroke-width="3"/></svg><span>Классификаторы</span></div>
            <ul>
              <li><div class="row"><i class="stub"></i><svg class="bl"><use href="#bullet-r"/></svg><span>Грунты</span></div></li>
              <li><div class="row"><i class="stub"></i><svg class="bl"><use href="#bullet-r"/></svg><span>Цвет</span></div></li>
              <li><div class="row"><i class="stub"></i><svg class="bl"><use href="#bullet-r"/></svg><span>Плотность/Прочность</span></div></li>
              <li><div class="row"><i class="stub"></i><svg class="bl"><use href="#bullet-r"/></svg><span>Структура/Текстура</span></div></li>
              <li><div class="row"><i class="stub"></i><svg class="bl"><use href="#bullet-r"/></svg><span>Консистенция/Водонасыщение/Водопроницаемость</span></div></li>
              <li><div class="row"><i class="stub"></i><svg class="bl"><use href="#bullet-r"/></svg><span>Криотекстура/Реология/Льдистость</span></div></li>
              <li><div class="row"><i class="stub"></i><svg class="bl"><use href="#bullet-r"/></svg><span>Прослои</span></div></li>
              <li><div class="row"><i class="stub"></i><svg class="bl"><use href="#bullet-r"/></svg><span>Включения</span></div></li>
              <li><div class="row"><i class="stub"></i><svg class="bl"><use href="#bullet-r"/></svg><span>Заполнители</span></div></li>
              <li><div class="row"><i class="stub"></i><svg class="bl"><use href="#bullet-r"/></svg><span>Вторичные изменения</span></div></li>
              <li><div class="row"><i class="stub"></i><svg class="bl"><use href="#bullet-r"/></svg><span>Геологические индексы</span></div></li>
            </ul>
          </li>
          <li><div class="row"><i class="box minus"></i><svg><use href="#objs"/></svg><span>Объекты</span></div>
            <ul>
              <li><div class="row"><i class="box minus"></i><svg><use href="#sun"/></svg><span>Трасса</span></div>
                <ul>
                  <li><div class="row"><i class="box minus"></i><svg><use href="#ige"/></svg><span>Классификатор ИГЭ</span></div>
                    <ul>
                      <li><div class="row"><i class="stub"></i><svg class="bl"><use href="#bullet-g"/></svg><span>1</span></div></li>
                      <li><div class="row"><i class="stub"></i><svg class="bl"><use href="#bullet-g"/></svg><span>2</span></div></li>
                      <li><div class="row"><i class="stub"></i><svg class="bl"><use href="#bullet-g"/></svg><span>7</span></div></li>
                      <li><div class="row"><i class="stub"></i><svg class="bl"><use href="#bullet-g"/></svg><span>9</span></div></li>
                      <li><div class="row"><i class="stub"></i><svg class="bl"><use href="#bullet-g"/></svg><span class="sel">11а</span></div></li>
                      <li><div class="row"><i class="stub"></i><svg class="bl"><use href="#bullet-g"/></svg><span>12</span></div></li>
                      <li><div class="row"><i class="stub"></i><svg class="bl"><use href="#bullet-g"/></svg><span>13</span></div></li>
                      <li><div class="row"><i class="stub"></i><svg class="bl"><use href="#bullet-g"/></svg><span>13а</span></div></li>
                      <li><div class="row"><i class="stub"></i><svg class="bl"><use href="#bullet-g"/></svg><span>13б</span></div></li>
                      <li><div class="row"><i class="stub"></i><svg class="bl"><use href="#bullet-g"/></svg><span>15</span></div></li>
                      <li><div class="row"><i class="stub"></i><svg class="bl"><use href="#bullet-g"/></svg><span>17</span></div></li>
                      <li><div class="row"><i class="stub"></i><svg class="bl"><use href="#bullet-g"/></svg><span>18</span></div></li>
                      <li><div class="row"><i class="stub"></i><svg class="bl"><use href="#bullet-g"/></svg><span>21</span></div></li>
                      <li><div class="row"><i class="stub"></i><svg class="bl"><use href="#bullet-g"/></svg><span>нас1</span></div></li>
                      <li><div class="row"><i class="stub"></i><svg class="bl"><use href="#bullet-g"/></svg><span>нас2</span></div></li>
                      <li><div class="row"><i class="stub"></i><svg class="bl"><use href="#bullet-g"/></svg><span>пог</span></div></li>
                      <li><div class="row"><i class="stub"></i><svg class="bl"><use href="#bullet-g"/></svg><span>прс</span></div></li>
                    </ul>
                  </li>
                  <li><div class="row"><i class="box plus"></i><svg><use href="#org"/></svg><span>Участки</span></div></li>
                </ul>
              </li>
            </ul>
          </li>
        </ul>
        <div class="hscroll"><i class="al"></i><div class="thumb"></div><i class="ar"></i></div>
      </div>
    </div>
    <div class="content">
      <div class="bar bar2"><i class="grip"></i><svg><use href="#ige"/></svg><i class="vsep"></i><button disabled><svg><path d="M8 1v13M1 7h13" stroke="#aaa" stroke-width="3.500"/></svg>Добавить</button><button disabled><svg><path d="M3 5q0-4 4-4t4 4q0 3-3 4M2 13h11l-3-4" fill="none" stroke="#aaa" stroke-width="2"/></svg>Изменить</button><button disabled><svg><path d="M2 2l11 12M13 2L2 14" stroke="#aaa" stroke-width="2.500"/></svg>Удалить</button><span class="author">Создал: k</span></div>
      <div class="form">
        <div class="fleft">
          <div class="frow"><label class="strong" for="num">Номер ИГЭ:</label><div class="sel-wrap white"><select id="num"><option>11а</option></select></div></div>
          <div class="frow"><label for="idx">Геологический индекс:</label></div>
          <div class="frow wide"><div class="sel-wrap"><select id="idx"><option>lgQIIIvd3+aQIII</option></select></div></div>
        </div>
        <div class="fright">
          <div class="frow"><label class="lb" for="soil">Грунт:</label><div class="sel-wrap"><select id="soil"><option>Песок пылеватый</option></select></div></div>
          <div class="frow"><label class="lc" for="st">Состояние:</label><input class="chk" type="checkbox" id="st" checked><div class="sel-wrap"><select aria-label="Состояние"><option>талый (T &gt;= 0)</option></select></div></div>
          <div class="frow"><label class="ld" for="agg">Заполнитель крупнообломочных грунтов:</label><div class="sel-wrap off"><select id="agg" disabled><option></option></select></div></div>
        </div>
      </div>
      <fieldset class="desc"><legend>Описание:</legend><textarea aria-label="Описание">Песок пылеватый коричневый, серовато-коричневый, средней плотности, влажный, водонасыщенный, с частыми прослоями глин, с остатками органики, с линзами гумуса; lgQIIIvd3+aQIII; Ro=0,2 МПа; п.29а</textarea></fieldset>
      <div class="tabs"><button class="on">Характеристики грунта</button><button>Физико-механические свойства</button><button>СТС/СМС</button><button class="wide">ГЭСН</button><button>Условное обозначение</button></div>
      <div class="page">
        <div class="gridbox">
          <table>
            <colgroup><col class="c1"><col class="c2"><col></colgroup>
            <thead><tr><th>Тип</th><th>Характеристика</th><th></th></tr></thead>
            <tbody>
              <tr class="cur"><td>Цвет основной</td><td>коричневый</td><td></td></tr>
              <tr><td>Цвет дополнительный</td><td>серовато-</td><td></td></tr>
              <tr><td>Цвет основной</td><td>коричневый</td><td></td></tr>
              <tr><td>Плотность</td><td>средней плотности</td><td></td></tr>
              <tr><td>Водонасыщение</td><td>влажный</td><td></td></tr>
              <tr><td>Водонасыщение</td><td>водонасыщенный</td><td></td></tr>
              <tr><td>Прослои частота</td><td>с частыми прослоями</td><td></td></tr>
              <tr><td>Прослои состав</td><td>глин</td><td></td></tr>
              <tr><td>Включения количество</td><td>с остатками</td><td></td></tr>
              <tr><td>Включения состав</td><td>органики</td><td></td></tr>
              <tr><td>Прослои частота</td><td>с линзами</td><td></td></tr>
              <tr><td>Прослои состав</td><td>гумуса</td><td></td></tr>
              <tr><td></td><td></td><td></td></tr><tr><td></td><td></td><td></td></tr><tr><td></td><td></td><td></td></tr><tr><td></td><td></td><td></td></tr><tr><td></td><td></td><td></td></tr><tr><td></td><td></td><td></td></tr>
            </tbody>
          </table>
        </div>
      </div>
      <div class="bar actions"><i class="grip"></i><button>Очистить</button><span class="sp"></span><button><svg><use href="#check"/></svg>Применить</button><button><svg><use href="#cross"/></svg>Отменить</button></div>
    </div>
  </div>
  <div class="dlgstatus">Пользователь: user.&nbsp; Ключ лицензии: SP: # 80009D61, время первой активации: 06.06.2022 11:46</div>
</section>
</body>
</html>
```
FILE: styles.css
```css
* { box-sizing: border-box; }
body { margin: 0; min-height: 100vh; display: flex; flex-direction: column; position: relative; background: #4b4b4b; color: #e6e6e6; font: 11px/16px "Noto Sans", "Open Sans", sans-serif; border-top: 1px solid #2b5a92; border-bottom: 2px solid #cfd8e2; overflow-x: hidden; }
button { font: inherit; color: inherit; background: none; border: 0; padding: 0; margin: 0; white-space: nowrap; }
h1, h2, p, ul { margin: 0; padding: 0; font-weight: normal; }
a { color: inherit; text-decoration: none; }
svg { width: 16px; height: 16px; flex: none; display: block; }
.sprite { position: absolute; width: 0; height: 0; }
.down { width: 0; height: 0; border: 4px solid transparent; border-top: 5px solid #fff; border-bottom: 0; flex: none; }
.pp { width: 16px; font: bold 15px/16px "Noto Sans", sans-serif; color: #f00; flex: none; white-space: nowrap; }

/* window header */
.titlebar { height: 31px; background: #fff; display: flex; align-items: flex-end; }
.quick { width: 259px; height: 25px; background: #4b4b4b; display: flex; align-items: center; padding-left: 8px; flex: none; }
.logo { width: 26px; height: 30px; align-self: flex-start; margin: 8px 14px 0 0; position: relative; z-index: 2; }
.quick button svg { width: 17px; height: 18px; }
.quick button { margin-right: 8px; }
.quick button + .down { margin: 0 10px 0 -4px; border-width: 4px 3px 0; }
.quick .down.dim { border-top-color: #bbb; }
.quick .down.more { margin: 0 0 0 14px; border-width: 5px 4px 0; }
.titlebar h1 { flex: 1; text-align: center; font-family: Lato, "Noto Sans", sans-serif; font-size: 12px; line-height: 28px; color: #000; white-space: nowrap; padding-left: 3px; }
.helpbox { width: 76px; height: 25px; background: #4b4b4b; display: flex; align-items: center; gap: 8px; padding-left: 6px; flex: none; }
.face { border: 1px solid #5b9bf0; background: #46617f; }
.face svg { width: 19px; height: 18px; }
.q { font-size: 16px; }
.winbtns { display: flex; align-self: flex-start; padding-right: 8px; }
.winbtns button { width: 46px; height: 29px; display: flex; align-items: center; justify-content: center; }
.winbtns svg { width: 12px; height: 12px; }
.winbtns .close { background: #c42b1c; }

.menu { height: 21px; display: flex; align-items: flex-end; padding-left: 43px; }
.menu a { padding: 0 15px; line-height: 19px; }
.menu a:nth-child(n+7) { padding-left: 14px; }
.menu .on { background: #7c7c7c; color: #fff; }

/* ribbon */
.ribbon { height: 99px; background: #5c5c5c; border: 1px solid #9a9a9a; border-left: 0; display: flex; gap: 2px; padding: 1px 4px 2px; }
.group { border: 1px solid #7c7c7c; border-right-color: #3c3c3c; border-bottom-color: #3c3c3c; display: flex; flex-direction: column; flex: none; }
.g1 { width: 337px; } .g2 { width: 407px; } .g3 { width: 413px; } .g4 { width: 231px; } .g5 { width: 191px; }
.cols { flex: 1; display: flex; padding-left: 6px; }
.col { display: flex; flex-direction: column; }
.g1 .col:first-child { width: 154px; }
.g2 .col:first-child { width: 189px; }
.g3 .col:first-child { width: 223px; }
.col button { height: 24px; display: flex; align-items: center; gap: 3px; }
.col.mid { justify-content: center; }
.group h2 { background: #6a6a6a; color: #cfcfcf; text-align: center; font-size: 11px; line-height: 15px; }

/* workspace */
.work { flex: 1; display: flex; gap: 4px; padding: 3px 2px 0 0; }
.dock { width: 463px; flex: none; display: flex; flex-direction: column; }
.dockhead { height: 19px; background: #7c7c7c; color: #ddd; display: flex; align-items: center; gap: 5px; padding: 0 5px 0 4px; }
.dockhead span { flex: 1; }
.dockhead svg { width: 12px; height: 12px; color: #fff; }
.dockbody { flex: 1; display: flex; }
.panes { flex: 1; display: flex; flex-direction: column; gap: 5px; padding-bottom: 4px; }
.pane { border: 1px solid #8a8f9c; color: #000; }
.treepane { height: 552px; background: #fff; padding: 1px 8px; margin-top: 1px; }
.props { flex: 1; background: #f0f0f0; border-color: #8a8f9c #8a8f9c #fff; }
.vtabs { width: 22px; display: flex; flex-direction: column; }
.vtabs button { height: 121px; writing-mode: vertical-rl; transform: rotate(180deg); width: 22px; text-align: center; color: #aaa; font-size: 11px; line-height: 22px; }
.vtabs .on { background: #7c7c7c; color: #fff; }

/* trees */
.tree, .tree ul { list-style: none; }
.tree li { position: relative; }
.tree .row { display: flex; align-items: center; white-space: nowrap; position: relative; }
.tree li::before { content: ""; position: absolute; left: 4px; top: 0; bottom: 0; border-left: 1px dotted #888; }
.tree li:last-child::before { bottom: auto; height: 10px; }
.tree.root > li:only-child::before { display: none; }
.box { width: 9px; height: 9px; border: 1px solid #888; background: linear-gradient(#33478f, #33478f) center / 5px 1px no-repeat, #fff; flex: none; position: relative; }
.box.plus::before { content: ""; position: absolute; left: 3px; top: 1px; width: 1px; height: 5px; background: #33478f; }
.stub { width: 9px; flex: none; height: 1px; border-top: 1px dotted #888; margin-left: 4px; }
.box::after { content: ""; position: absolute; left: 8px; top: 3px; width: 5px; border-top: 1px dotted #888; }
.big { font-size: 12px; }
.big .row { height: 20px; line-height: 20px; }
.big ul { padding-left: 19px; }
.big svg { margin: 0 3px 0 6px; }
.big .stub + svg { margin-left: 2px; }
.big span { padding: 0 2px; }
.big .sel { background: #a0a0a0; }
.small { font-size: 10px; color: #222; }
.small .row { height: 15px; line-height: 15px; }
.small li:nth-child(odd) > .row { height: 16px; }
.small ul { padding-left: 15px; }
.small li::before { border-color: #9ab; }
.small .box { border-color: #aaa; }
.small svg { width: 13px; height: 13px; margin: 0 2px 0 4px; }
.small .stub { width: 8px; }
.small svg.bl { width: 8px; height: 8px; margin: 0 5px 0 2px; }
.small span { padding: 0 2px; }
.small .sel { background: #3399ff; color: #fff; }

/* drawing area */
.docs { flex: 1; display: flex; flex-direction: column; min-width: 0; margin-bottom: 6px; border: 0 solid #7c7c7c; border-width: 0 1px 2px 2px; }
.doctabs { height: 20px; display: flex; align-items: center; justify-content: space-between; border-bottom: 1px solid #8a8a8a; padding-right: 4px; }
.doctab { background: #7c7c7c; color: #fff; height: 18px; display: flex; align-items: center; gap: 16px; padding: 0 3px 0 22px; }
.doctab svg { width: 12px; height: 12px; color: #ddd; }
.doctabs .down { border-width: 6px 5px 0; }
.canvas { flex: 1; position: relative; background: #2b2c2e; overflow: hidden; min-height: 0; }
.drawing { position: absolute; inset: 0; width: 100%; height: 100%; }
.cadtext { font: italic 10px "Liberation Sans", sans-serif; fill: #bbb; }
.viewbtns { position: absolute; left: 7px; top: 6px; display: flex; gap: 2px; }
.viewbtns button, .cube { height: 17px; line-height: 17px; background: #454647; color: #8f8f8f; border-radius: 3px; padding: 0 10px; }
.cube { position: absolute; right: 68px; top: 179px; line-height: 16px; }
.layouts { height: 20px; border-top: 2px solid #7c7c7c; display: flex; align-items: flex-start; }
.layouts button { border: 1px solid #7c7c7c; border-width: 0 1px 1px 0; height: 17px; line-height: 16px; padding: 0 7px; color: #bbb; }
.layouts .on { background: #7c7c7c; color: #fff; }
.sheet { margin: 1px 18px 0 3px; }

/* console */
.console { height: 70px; display: flex; }
.conside { width: 18px; background: #7c7c7c; display: flex; flex-direction: column; align-items: center; gap: 7px; padding-top: 5px; overflow: hidden; }
.conside svg { width: 12px; height: 12px; color: #fff; }
.conside span { writing-mode: vertical-rl; transform: rotate(180deg); line-height: 18px; color: #ddd; margin-top: -7px; }
.conmain { flex: 1; background: #5c5c5c; font: 12px/14px "Liberation Mono", monospace; display: flex; flex-direction: column; padding-left: 3px; }
.log { height: 53px; overflow: hidden; display: flex; flex-direction: column; justify-content: flex-end; }
.log p { flex: none; }
.cmd { flex: 1; display: flex; align-items: center; border-top: 1px solid #777; }
.cmd input { flex: 1; background: none; border: 0; padding: 0; color: #fff; font: inherit; outline: 0; }

/* status bar */
.status { height: 24px; display: flex; align-items: center; padding-left: 3px; color: #eee; white-space: nowrap; }
.coords { width: 172px; }
.status > button { height: 21px; padding: 0 12px; }
.status > .on { background: #4d698c; border: 1px solid #5b9bf0; padding: 0 7px; margin-right: -1px; }
.sep { width: 1px; height: 20px; background: #777; }
.right { margin-left: auto; display: flex; align-items: center; padding-right: 4px; }
.ic { margin: 0 3px; }
.right .gap { width: 88px; }
.bulb { color: #c8c8c8; }
.trio { display: flex; }
.trio button, .tools button { width: 29px; height: 21px; display: flex; align-items: center; justify-content: center; }
.trio button { background: #4d698c; border: 1px solid #5b9bf0; }
.scale { width: 88px; text-align: center; }
.tools { display: flex; }
.tools button { border-left: 1px solid #777; }
.tools .narrow { width: 23px; }
.tools .fill svg { background: #74a9ee; }

/* database window */
.dialog { position: absolute; left: 514px; top: 219px; width: 1058px; height: 707px; background: #f0f0f0; color: #222; border: 1px solid #ddd; border-right: 2px solid #aaa; display: flex; flex-direction: column; font-family: Lato, "Noto Sans", sans-serif; }
.dialog input, .dialog select, .dialog textarea { font: inherit; color: inherit; border-radius: 0; }
.dlgtitle { height: 23px; display: flex; align-items: center; background: linear-gradient(90deg, #c8c8c8, #b8b8b8 28%, #8f8f8f 34%, #a0a0a0 60%, #8c8c8c 70%, #a2a2a2 85%, #a8a8a8); border-bottom: 1px solid #666; gap: 3px; font-size: 10px; color: #111; }
.dlgtitle span { flex: 1; }
.dlgtitle > svg { width: 12px; margin-left: 1px; }
.dlgbtns { display: flex; align-self: flex-start; border: 1px solid #555; border-top: 0; border-radius: 0 0 4px 4px; overflow: hidden; }
.dlgbtns button { width: 22px; height: 15px; background: linear-gradient(#ccc, #888); border-right: 1px solid #555; }
.dlgbtns .close { width: 37px; background: linear-gradient(#e09080, #c43a20 50%, #d05030); border: 0; }
.dlgbtns svg { height: 12px; margin: auto; }
.bar { height: 23px; background: linear-gradient(#fff, #f0f0f0); display: flex; align-items: center; gap: 5px; flex: none; }
.bar button { display: flex; align-items: center; gap: 2px; }
.bar button:disabled, .author { color: #8a8a8a; }
.bar svg { width: 13px; height: 13px; }
.grip { width: 2px; height: 13px; margin-left: 2px; border-left: 2px dotted #aaa; flex: none; }
.vsep { width: 1px; height: 14px; background: #bbb; }
.split { flex: 1; display: flex; gap: 7px; min-height: 0; }
.side { width: 284px; padding-left: 2px; display: flex; flex-direction: column; }
.find { height: 24px; gap: 2px; font-size: 10px; margin-bottom: 2px; }
.find svg { width: 14px; height: 14px; }
.find input { width: 80px; height: 19px; border: 1px solid #777; background: #fff; margin-left: 4px; }
.treebox { flex: 1; border: 1px solid #888; background: #e0ffff; display: flex; flex-direction: column; justify-content: space-between; overflow: hidden; margin-bottom: 2px; }
.treebox .tree { padding: 2px; }
.hscroll { height: 15px; background: #f0f0f0; display: flex; align-items: center; gap: 8px; padding: 0 5px; }
.thumb { flex: 1; height: 13px; border: 1px solid #999; border-radius: 2px; background: repeating-linear-gradient(90deg, #444 0 1px, transparent 1px 3px) center / 7px 6px no-repeat, linear-gradient(#eee, #c8c8c8); }
.al, .ar { border: 3px solid transparent; border-right: 4px solid #222; border-left: 0; }
.ar { border-left: 4px solid #222; border-right: 0; }
.content { flex: 1; display: flex; flex-direction: column; padding: 0 3px 0 0; min-width: 0; }
.bar2 { margin-bottom: 4px; }
.author { margin-left: auto; padding-right: 3px; }
.form { height: 90px; border: 1px solid #777; display: flex; padding: 2px 3px; }
.form label { white-space: nowrap; flex: none; }
.fleft { width: 177px; }
.fright { flex: 1; }
.frow { height: 28px; display: flex; align-items: center; }
.frow.wide .sel-wrap { width: 166px; flex: none; }
.strong { width: 78px; font-weight: bold; color: #000; }
.fleft label { padding-left: 3px; }
.fleft .white { width: 89px; flex: none; }
.lb { width: 90px; } .lc { width: 67px; } .ld { width: 227px; color: #a5a5a5; }
.chk { appearance: none; width: 17px; height: 18px; margin: 0 6px 4px 0; border: 1px solid #888; border-radius: 3px !important; background: #f4f4f4 url("data:image/svg+xml,%3Csvg xmlns='http://www.w3.org/2000/svg' viewBox='0 0 16 16'%3E%3Cpath d='M7 13l6-10' stroke='%23999'/%3E%3Cpath d='M2 8l3-1 1 3 6-8-5 12H6z' fill='%230a8a1a'/%3E%3C/svg%3E") center / 14px no-repeat; }
.sel-wrap { position: relative; flex: 1; height: 23px; border: 1px solid #777; border-radius: 3px; background: linear-gradient(#f2f2f2, #e8e8e8 50%, #d8d8d8 50%, #cfcfcf); }
.sel-wrap::after { content: ""; position: absolute; right: 4px; top: 9px; border: 3px solid transparent; border-top: 4px solid #000; border-bottom: 0; pointer-events: none; }
.sel-wrap select { appearance: none; width: 100%; height: 21px; border: 0; background: none; padding: 0 2px; }
.sel-wrap.white { background: #fff; border-color: #e0e0e0; border-radius: 0; }
.sel-wrap.off { background: #f4f4f4; border-color: #bbb; }
.sel-wrap.off::after { border-top-color: #aaa; }
.desc { margin: 7px 0 0; padding: 0 3px 3px; border: 1px solid #dde3e8; border-radius: 3px; min-width: 0; height: 83px; }
.desc legend { padding: 0 3px; margin-left: 2px; line-height: 14px; }
.desc textarea { display: block; width: 100%; height: 62px; margin-top: 5px; border: 1px solid #e0e4e8; border-top: 1px solid #666; border-left: 1px solid #777; background: #fff; resize: none; padding: 2px 1px; line-height: 16px; outline: 0; overflow: hidden; }
.tabs { display: flex; align-items: flex-end; margin-top: 6px; height: 21px; }
.tabs button { height: 20px; border: 1px solid #888; border-bottom: 0; padding: 0 3px; background: linear-gradient(#eee, #d4d4d4); }
.tabs .on { height: 22px; margin-bottom: -1px; padding: 0 5px; background: #fff; position: relative; }
.tabs .wide { padding-right: 16px; }
.page { flex: 1; border: 1px solid #888; background: #fff; padding: 5px; min-height: 0; }
.gridbox { border: 1px solid #888; height: 100%; overflow: hidden; padding-top: 1px; }
table { border-collapse: collapse; table-layout: fixed; width: 100%; }
.c1 { width: 235px; } .c2 { width: 266px; }
th, td { height: 19px; text-align: left; font-weight: normal; padding: 0 5px; line-height: 18px; border-right: 1px solid #eee; border-bottom: 1px solid #eee; }
th:last-child, td:last-child { border-right: 0; }
th { height: 20px; background: linear-gradient(#fff, #f2f3f5); border-color: #ddd; }
.cur td { background: #f0f0f0; }
.cur td:last-child { background: #fff; }
.actions { height: 21px; margin-top: 8px; gap: 8px; }
.sp { flex: 1; }
.dlgstatus { height: 21px; border-top: 1px solid #aaa; background: #f1ecec; padding-left: 3px; line-height: 19px; }
```
